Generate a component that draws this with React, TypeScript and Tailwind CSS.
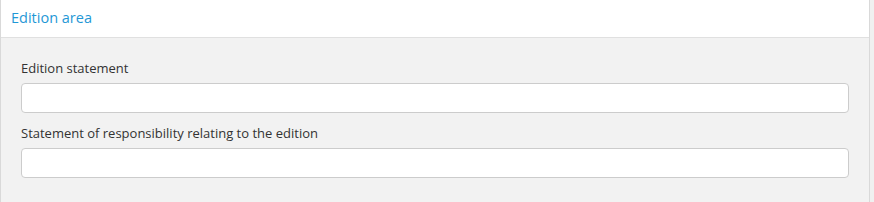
export default function App() {
  return (
    <div className="w-[874px] h-[202px] bg-[#f0f0f0] overflow-hidden" style={{ fontFamily: '"Open Sans", sans-serif' }}>
      <div className="w-[870px] h-[202px] border-l border-r border-[#d9d9d9] bg-[#f2f2f2] flex flex-col">
        <div className="h-[38px] bg-white border-b border-[#e0e0e0] flex items-center pl-[10px] pb-[2px]">
          <span className="text-[14.5px] text-[#1f98d6]">Edition area</span>
        </div>
        <div className="pl-[20px] pr-[20px] pt-[21px] flex flex-col">
          <label className="text-[13px] leading-[18px] text-[#333333]">Edition statement</label>
          <input className="mt-[6px] h-[30px] w-[828px] bg-white border border-[#cccccc] rounded-[4px] outline-none" />
          <label className="mt-[11px] text-[13px] leading-[18px] text-[#333333]">Statement of responsibility relating to the edition</label>
          <input className="mt-[6px] h-[30px] w-[828px] bg-white border border-[#cccccc] rounded-[4px] outline-none" />
        </div>
      </div>
    </div>
  );
}
